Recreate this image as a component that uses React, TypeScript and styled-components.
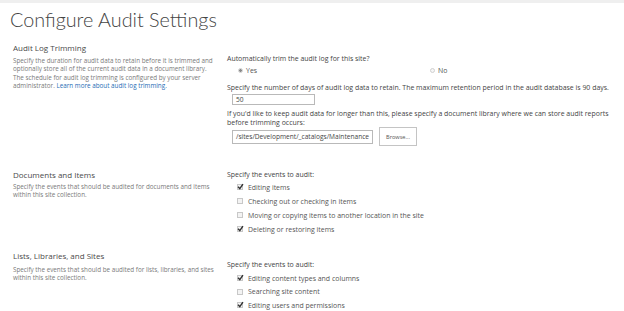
import styled, { createGlobalStyle } from "styled-components";

const GlobalStyle = createGlobalStyle`
  html, body {
    margin: 0;
    padding: 0;
    background: #ffffff;
  }
  body {
    font-family: "Open Sans", "Noto Sans", "Liberation Sans", sans-serif;
    color: #444444;
  }
`;

const Page = styled.div`
  width: 624px;
  height: 311px;
  overflow: hidden;
`;

const TopBar = styled.div`
  height: 3px;
  background-color: #efefef;
`;

const Title = styled.h1`
  margin: 0;
  padding: 1px 0 0 10px;
  height: 40px;
  box-sizing: border-box;
  font-family: Lato, "Open Sans", sans-serif;
  font-size: 19.8px;
  font-weight: 300;
  line-height: 30px;
  color: #444444;
`;

const Section = styled.div<{ $height: number }>`
  display: grid;
  grid-template-columns: 214px 1fr;
  height: ${(p) => p.$height}px;
`;

const Aside = styled.div`
  padding-left: 13px;
`;

const SectionTitle = styled.div<{ $gap: number }>`
  font-size: 8px;
  line-height: 10px;
  color: #4a4a4a;
  margin-bottom: ${(p) => p.$gap}px;
`;

const SectionDesc = styled.div`
  font-size: 6.3px;
  line-height: 8.4px;
  color: #7a7a7a;
  width: 208px;
`;

const Link = styled.a`
  color: #1f6db5;
  text-decoration: none;
`;

const Body = styled.div<{ $pad: number }>`
  padding-left: 13px;
  padding-top: ${(p) => p.$pad}px;
  font-size: 6.95px;
  color: #444444;
  max-width: 386px;
`;

const Line = styled.div<{ $mt?: number }>`
  line-height: 9px;
  margin-top: ${(p) => p.$mt ?? 0}px;
`;

const RadioRow = styled.div`
  display: flex;
  height: 12px;
  align-items: center;
  padding-left: 11px;
  margin: 1.5px 0 7px;
`;

const RadioOption = styled.label<{ $width?: number }>`
  display: flex;
  align-items: center;
  gap: 3px;
  width: ${(p) => (p.$width ? `${p.$width}px` : "auto")};
  color: #555555;
`;

const RadioDot = styled.span<{ $on?: boolean }>`
  width: 5px;
  height: 5px;
  border-radius: 50%;
  border: 1px solid #d0d0d0;
  background: ${(p) =>
    p.$on
      ? "radial-gradient(circle, #8a8a8a 0 1.3px, #f4f4f4 1.6px)"
      : "#f6f6f6"};
  box-sizing: border-box;
`;

const TextBox = styled.div<{ $width: number; $height: number }>`
  width: ${(p) => p.$width}px;
  height: ${(p) => p.$height}px;
  border: 1px solid #b9b9b9;
  box-sizing: border-box;
  display: flex;
  align-items: center;
  padding-left: 3px;
  font-size: 6.6px;
  color: #444444;
  white-space: nowrap;
  overflow: hidden;
`;

const InputRow = styled.div<{ $mt?: number }>`
  display: flex;
  align-items: center;
  gap: 6px;
  padding-left: 5px;
  margin-top: ${(p) => p.$mt ?? 0}px;
`;

const Browse = styled.div`
  width: 38px;
  height: 19px;
  border: 1px solid #c4c4c4;
  box-sizing: border-box;
  display: flex;
  align-items: center;
  justify-content: center;
  font-size: 5.6px;
  color: #555555;
`;

const CheckList = styled.div<{ $pad: number }>`
  padding-left: 10px;
  padding-top: ${(p) => p.$pad}px;
`;

const CheckItem = styled.div<{ $height: number }>`
  display: flex;
  align-items: center;
  height: ${(p) => p.$height}px;
  gap: 5px;
  color: #555555;
`;

const Box = styled.span`
  position: relative;
  width: 6px;
  height: 6px;
  border: 1px solid #c8c8c8;
  background: #f3f3f3;
  box-sizing: border-box;
  display: inline-block;
`;

const Tick = styled.svg`
  position: absolute;
  left: -1px;
  top: -2px;
  width: 7px;
  height: 7px;
`;

function Check({ on }: { on?: boolean }) {
  return (
    <Box>
      {on && (
        <Tick viewBox="0 0 10 10">
          <path d="M1.5 5.5 L4 8 L8.5 1.5" fill="none" stroke="#333" strokeWidth="2" />
        </Tick>
      )}
    </Box>
  );
}

type AuditEvent = { label: string; on: boolean };

const docEvents: AuditEvent[] = [
  { label: "Editing items", on: true },
  { label: "Checking out or checking in items", on: false },
  { label: "Moving or copying items to another location in the site", on: false },
  { label: "Deleting or restoring items", on: true },
];

const listEvents: AuditEvent[] = [
  { label: "Editing content types and columns", on: true },
  { label: "Searching site content", on: false },
  { label: "Editing users and permissions", on: true },
];

function EventList({ events, pad, row }: { events: AuditEvent[]; pad: number; row: number }) {
  return (
    <CheckList $pad={pad}>
      {events.map((e) => (
        <CheckItem key={e.label} $height={row}>
          <Check on={e.on} />
          {e.label}
        </CheckItem>
      ))}
    </CheckList>
  );
}

export default function App() {
  return (
    <Page>
      <GlobalStyle />
      <TopBar />
      <Title>Configure Audit Settings</Title>

      <Section $height={127}>
        <Aside>
          <SectionTitle $gap={4}>Audit Log Trimming</SectionTitle>
          <SectionDesc>
            Specify the duration for audit data to retain before it is trimmed and
            <br />
            optionally store all of the current audit data in a document library.
            <br />
            The schedule for audit log trimming is configured by your server
            <br />
            administrator. <Link href="#">Learn more about audit log trimming.</Link>
          </SectionDesc>
        </Aside>
        <Body $pad={10.5}>
          <Line>Automatically trim the audit log for this site?</Line>
          <RadioRow>
            <RadioOption $width={192}>
              <RadioDot $on />
              Yes
            </RadioOption>
            <RadioOption>
              <RadioDot />
              No
            </RadioOption>
          </RadioRow>
          <Line>
            Specify the number of days of audit log data to retain. The maximum
            retention period in the audit database is 90 days.
          </Line>
          <InputRow $mt={1.5}>
            <TextBox $width={83} $height={11}>50</TextBox>
          </InputRow>
          <Line $mt={4.5}>
            If you'd like to keep audit data for longer than this, please specify a
            document library where we can store audit reports before trimming occurs:
          </Line>
          <InputRow>
            <TextBox $width={141} $height={14}>
              /sites/Development/_catalogs/Maintenance
            </TextBox>
            <Browse>Browse...</Browse>
          </InputRow>
        </Body>
      </Section>

      <Section $height={81}>
        <Aside>
          <SectionTitle $gap={3}>Documents and Items</SectionTitle>
          <SectionDesc>
            Specify the events that should be audited for documents and items
            <br />
            within this site collection.
          </SectionDesc>
        </Aside>
        <Body $pad={0}>
          <Line>Specify the events to audit:</Line>
          <EventList events={docEvents} pad={1} row={14} />
        </Body>
      </Section>

      <Section $height={59}>
        <Aside>
          <SectionTitle $gap={5}>Lists, Libraries, and Sites</SectionTitle>
          <SectionDesc>
            Specify the events that should be audited for lists, libraries, and sites
            <br />
            within this site collection.
          </SectionDesc>
        </Aside>
        <Body $pad={8.5}>
          <Line>Specify the events to audit:</Line>
          <EventList events={listEvents} pad={2.75} row={13.5} />
        </Body>
      </Section>
    </Page>
  );
}
